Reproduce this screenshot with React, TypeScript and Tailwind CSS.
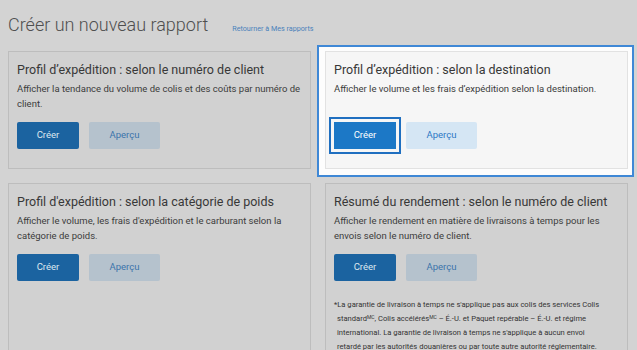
import React from "react";

type Report = {
  title: string;
  description: string;
  active?: boolean;
  footnote?: boolean;
};

const reports: Report[] = [
  {
    title: "Profil d\u2019expédition : selon le numéro de client",
    description:
      "Afficher la tendance du volume de colis et des coûts par numéro de client.",
  },
  {
    title: "Profil d\u2019expédition : selon la destination",
    description: "Afficher le volume et les frais d\u2019expédition selon la destination.",
    active: true,
  },
  {
    title: "Profil d'expédition : selon la catégorie de poids",
    description:
      "Afficher le volume, les frais d'expédition et le carburant selon la catégorie de poids.",
  },
  {
    title: "Résumé du rendement : selon le numéro de client",
    description:
      "Afficher le rendement en matière de livraisons à temps pour les envois selon le numéro de client.",
    footnote: true,
  },
];

function ReportCard({ report }: { report: Report }) {
  const { active } = report;
  return (
    <div
      className={
        active
          ? "h-full border border-[#e2e2e2] bg-[#f6f6f6] px-2 pt-[10px] pb-[19px]"
          : "h-full border border-[#bdbdbd] bg-[#d1d1d1] px-2 pt-[10px] pb-[19px]"
      }
    >
      <h2 className="text-[12.5px] leading-4 text-[#383838]">{report.title}</h2>
      <p className="mt-[3px] h-[30px] text-[9.5px] leading-[15px] text-[#3c3c3c]">
        {report.description}
      </p>
      <div className="mt-[11px] flex gap-[10px]">
        <button
          className={
            active
              ? "h-[27px] w-[62px] bg-[#1c78c6] text-[9.5px] text-white outline-2 outline-solid outline-[#1f6fc0] outline-offset-[3px]"
              : "h-[27px] w-[62px] rounded-[2px] bg-[#1b63a0] text-[9.5px] text-[#dfe8f0]"
          }
        >
          Créer
        </button>
        <button
          className={
            active
              ? "h-[27px] w-[71px] rounded-[2px] bg-[#d5e6f4] text-[9.5px] text-[#2d78c4]"
              : "h-[27px] w-[71px] rounded-[2px] bg-[#b5c2cd] text-[9.5px] text-[#3c74ab]"
          }
        >
          Aperçu
        </button>
      </div>
      {report.footnote && (
        <p className="mt-[17px] pr-[14px] pl-[3px] -indent-[3px] text-[7.6px] leading-[14px] text-[#333]">
          *La garantie de livraison à temps ne s&apos;applique pas aux colis des services Colis
          standard<sup className="text-[5px] leading-none">MC</sup>, Colis accélérés
          <sup className="text-[5px] leading-none">MC</sup> – É.-U. et Paquet repérable – É.-U. et
          régime international. La garantie de livraison à temps ne s&apos;applique à aucun envoi
          retardé par les autorités douanières ou par toute autre autorité réglementaire.
        </p>
      )}
    </div>
  );
}

export default function App() {
  return (
    <div className="h-[350px] w-[637px] overflow-hidden bg-[#d3d3d3] font-['Roboto',sans-serif]">
      <div className="flex h-[45px] items-baseline pl-2 pt-[11px]">
        <h1 className="text-[18px] font-light text-[#4f4f4f]">Créer un nouveau rapport</h1>
        <a className="ml-[24px] text-[7.2px] text-[#4a82bb]">Retourner à Mes rapports</a>
      </div>
      <div className="grid grid-cols-[317px_317px]">
        {reports.map((r) => (
          <div
            key={r.title}
            className={
              r.active
                ? "border-2 border-[#3f88d6] bg-[#fdfdfd] pt-[4px] pl-[6px] pr-[4px] pb-[6px]"
                : "pt-[6px] pl-2 pr-[6px] pb-2"
            }
          >
            <ReportCard report={r} />
          </div>
        ))}
      </div>
    </div>
  );
}
